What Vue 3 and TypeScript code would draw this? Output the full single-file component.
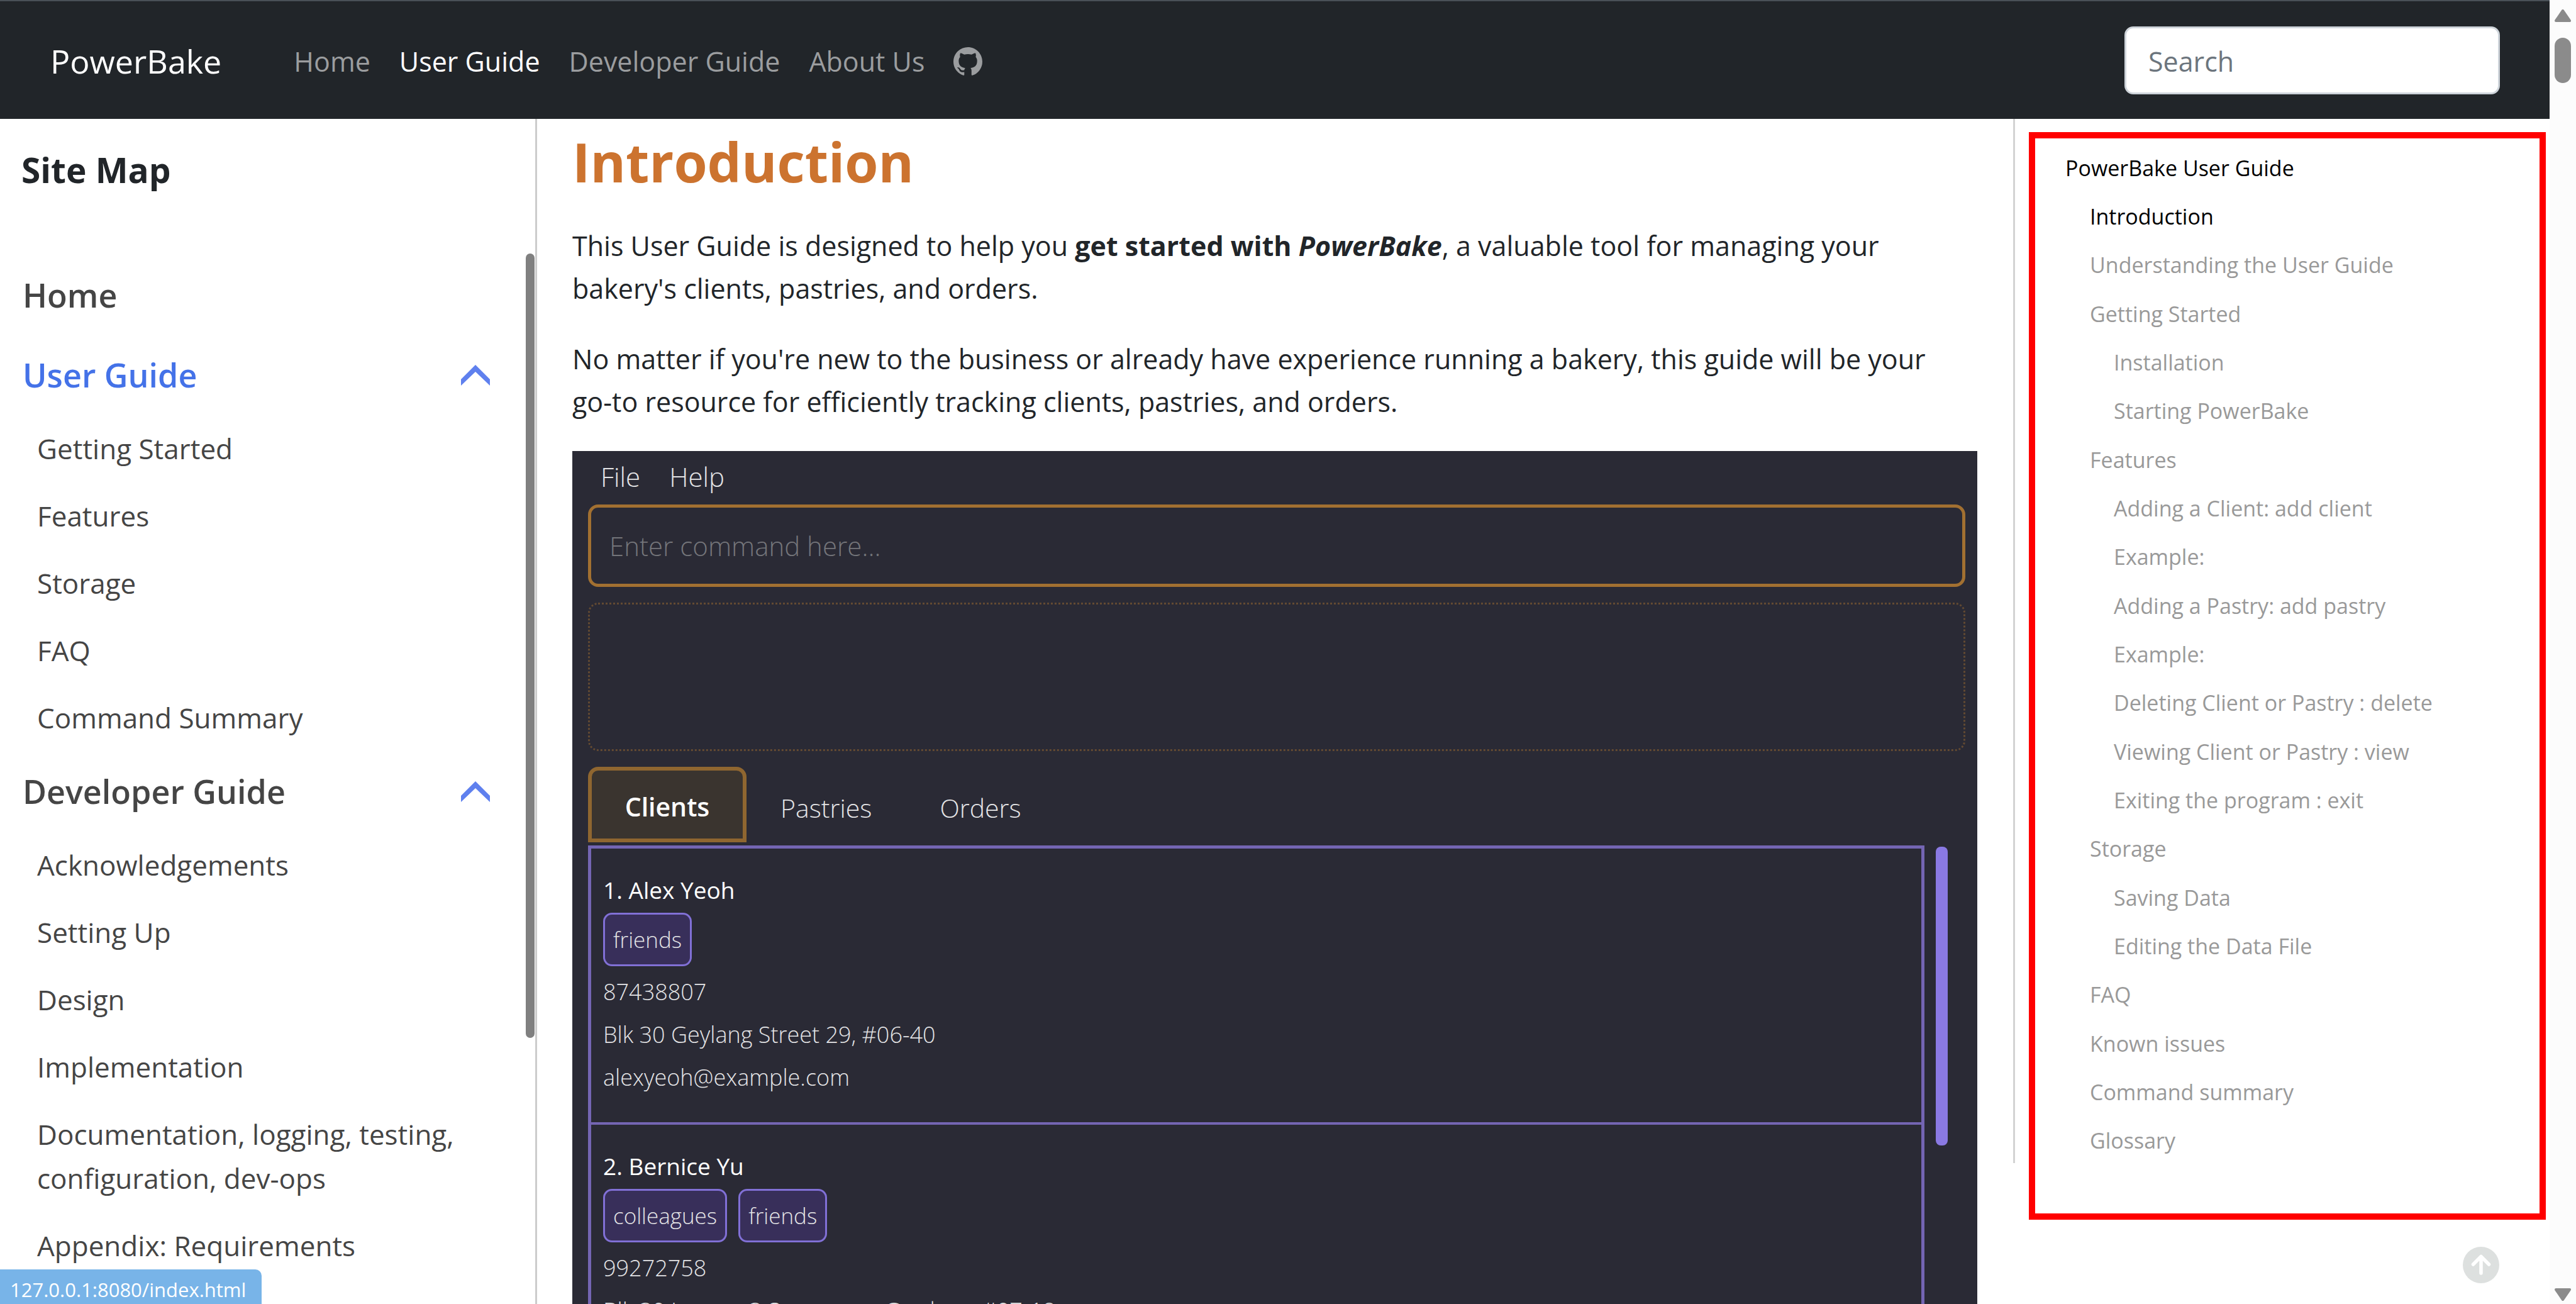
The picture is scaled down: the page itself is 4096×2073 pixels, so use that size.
<script setup lang="ts">
interface SiteGroup {
  title: string
  current?: boolean
  children: string[]
}

interface TocEntry {
  text: string
  level: 1 | 2 | 3
  active?: boolean
}

interface Client {
  id: number
  name: string
  tags: string[]
  phone: string
  address: string
  email: string
}

const navLinks = [
  { text: 'Home', active: false },
  { text: 'User Guide', active: true },
  { text: 'Developer Guide', active: false },
  { text: 'About Us', active: false },
]

const siteMap: SiteGroup[] = [
  { title: 'Home', children: [] },
  {
    title: 'User Guide',
    current: true,
    children: ['Getting Started', 'Features', 'Storage', 'FAQ', 'Command Summary'],
  },
  {
    title: 'Developer Guide',
    children: [
      'Acknowledgements',
      'Setting Up',
      'Design',
      'Implementation',
      'Documentation, logging, testing, configuration, dev-ops',
      'Appendix: Requirements',
    ],
  },
]

const toc: TocEntry[] = [
  { text: 'PowerBake User Guide', level: 1, active: true },
  { text: 'Introduction', level: 2, active: true },
  { text: 'Understanding the User Guide', level: 2 },
  { text: 'Getting Started', level: 2 },
  { text: 'Installation', level: 3 },
  { text: 'Starting PowerBake', level: 3 },
  { text: 'Features', level: 2 },
  { text: 'Adding a Client: add client', level: 3 },
  { text: 'Example:', level: 3 },
  { text: 'Adding a Pastry: add pastry', level: 3 },
  { text: 'Example:', level: 3 },
  { text: 'Deleting Client or Pastry : delete', level: 3 },
  { text: 'Viewing Client or Pastry : view', level: 3 },
  { text: 'Exiting the program : exit', level: 3 },
  { text: 'Storage', level: 2 },
  { text: 'Saving Data', level: 3 },
  { text: 'Editing the Data File', level: 3 },
  { text: 'FAQ', level: 2 },
  { text: 'Known issues', level: 2 },
  { text: 'Command summary', level: 2 },
  { text: 'Glossary', level: 2 },
]

const clients: Client[] = [
  {
    id: 1,
    name: 'Alex Yeoh',
    tags: ['friends'],
    phone: '87438807',
    address: 'Blk 30 Geylang Street 29, #06-40',
    email: 'alexyeoh@example.com',
  },
  {
    id: 2,
    name: 'Bernice Yu',
    tags: ['colleagues', 'friends'],
    phone: '99272758',
    address: 'Blk 30 Lorong 3 Serangoon Gardens, #07-18',
    email: 'berniceyu@example.com',
  },
]
</script>

<template>
  <div class="window">
    <div class="page">
      <header class="navbar">
        <a class="brand" href="#">PowerBake</a>
        <nav class="links" aria-label="Main">
          <a v-for="l in navLinks" :key="l.text" href="#" :class="{ active: l.active }">{{ l.text }}</a>
          <a class="github" href="#" aria-label="GitHub">
            <svg viewBox="0 0 16 16" aria-hidden="true">
              <path
                d="M8 0C3.58 0 0 3.58 0 8c0 3.54 2.29 6.53 5.47 7.59.4.07.55-.17.55-.38 0-.19-.01-.82-.01-1.49-2.01.37-2.53-.49-2.69-.94-.09-.23-.48-.94-.82-1.13-.28-.15-.68-.52-.01-.53.63-.01 1.08.58 1.23.82.72 1.21 1.87.87 2.33.66.07-.52.28-.87.51-1.07-1.78-.2-3.64-.89-3.64-3.95 0-.87.31-1.59.82-2.15-.08-.2-.36-1.02.08-2.12 0 0 .67-.21 2.2.82.64-.18 1.32-.27 2-.27s1.36.09 2 .27c1.53-1.04 2.2-.82 2.2-.82.44 1.1.16 1.92.08 2.12.51.56.82 1.27.82 2.15 0 3.07-1.87 3.75-3.65 3.95.29.25.54.73.54 1.48 0 1.07-.01 1.93-.01 2.2 0 .21.15.46.55.38A8.01 8.01 0 0 0 16 8c0-4.42-3.58-8-8-8z"
              />
            </svg>
          </a>
        </nav>
        <input class="search" type="search" placeholder="Search" aria-label="Search" />
      </header>

      <div class="columns">
        <aside class="sidebar">
          <h2 class="sidebar-title">Site Map</h2>
          <nav class="site-nav" aria-label="Site map">
            <ul class="groups">
              <li v-for="g in siteMap" :key="g.title">
                <div class="group-head" :class="{ current: g.current }">
                  <a href="#">{{ g.title }}</a>
                  <button v-if="g.children.length" type="button" :aria-label="'Collapse ' + g.title">
                    <svg viewBox="0 0 46 34" aria-hidden="true">
                      <path d="M0 24 23 1 46 24V34L23 12 0 34Z" />
                    </svg>
                  </button>
                </div>
                <ul v-if="g.children.length" class="children">
                  <li v-for="c in g.children" :key="c"><a href="#">{{ c }}</a></li>
                </ul>
              </li>
            </ul>
            <span class="side-thumb"></span>
          </nav>
        </aside>

        <main class="content">
          <h1>Introduction</h1>
          <p>
            This User Guide is designed to help you <strong>get started with <em>PowerBake</em></strong>, a valuable
            tool for managing your bakery's clients, pastries, and orders.
          </p>
          <p>
            No matter if you're new to the business or already have experience running a bakery, this guide will be
            your <span class="keep">go-to</span> resource for efficiently tracking clients, pastries, and orders.
          </p>

          <section class="app" aria-label="PowerBake application">
            <div class="menu">
              <button type="button">File</button>
              <button type="button">Help</button>
            </div>
            <input class="command" type="text" placeholder="Enter command here..." aria-label="Command" />
            <div class="result"></div>
            <div class="tabs">
              <button class="tab selected" type="button">Clients</button>
              <button class="tab" type="button">Pastries</button>
              <button class="tab" type="button">Orders</button>
            </div>
            <div class="list-row">
              <ol class="cards">
                <li v-for="c in clients" :key="c.id" class="card">
                  <h3>{{ c.id }}. {{ c.name }}</h3>
                  <div class="tags">
                    <span v-for="t in c.tags" :key="t" class="tag">{{ t }}</span>
                  </div>
                  <div class="line">{{ c.phone }}</div>
                  <div class="line">{{ c.address }}</div>
                  <div class="line">{{ c.email }}</div>
                </li>
              </ol>
              <span class="list-thumb"></span>
            </div>
          </section>
        </main>

        <aside class="toc-column">
          <nav class="toc" aria-label="On this page">
            <ul>
              <li v-for="(t, i) in toc" :key="i" :class="['level-' + t.level, { active: t.active }]">
                <a href="#">{{ t.text }}</a>
              </li>
            </ul>
          </nav>
        </aside>
      </div>

      <button class="to-top" type="button" aria-label="Back to top">
        <svg viewBox="0 0 58 58" aria-hidden="true">
          <circle cx="29" cy="29" r="29" fill="#dde0df" />
          <path
            d="M29 42V16M16.500 28 29 15.500 41.500 28"
            fill="none"
            stroke="#fff"
            stroke-width="5.500"
            stroke-linecap="round"
            stroke-linejoin="round"
          />
        </svg>
      </button>
      <div class="status">127.0.0.1:8080/index.html</div>
    </div>

    <div class="scrollbar">
      <svg viewBox="0 0 26 20" aria-hidden="true">
        <path d="M13 2 24 18H2Z" />
      </svg>
      <span class="page-thumb"></span>
      <svg class="down" viewBox="0 0 26 20" aria-hidden="true">
        <path d="M13 18 24 2H2Z" />
      </svg>
    </div>
  </div>
</template>

<style>
body {
  margin: 0;
}
</style>

<style scoped>
* {
  box-sizing: border-box;
}

ul,
ol {
  margin: 0;
  padding: 0;
  list-style: none;
}

a {
  color: inherit;
  text-decoration: none;
}

button {
  padding: 0;
  border: 0;
  background: none;
  color: inherit;
  font: inherit;
}

svg {
  display: block;
}

.window {
  display: flex;
  height: 100vh;
  overflow: hidden;
  background: #fff;
  color: #212529;
  font-family: 'Open Sans', 'Noto Sans', sans-serif;
  font-size: 43px;
  line-height: 68px;
}

.page {
  position: relative;
  display: flex;
  flex: 1;
  flex-direction: column;
  min-width: 0;
}

/* top bar */
.navbar {
  display: flex;
  align-items: center;
  flex: none;
  height: 189px;
  padding: 0 79px 0 80px;
  border-top: 2px solid #495057;
  background: #212529;
}

.brand {
  margin-right: 115px;
  padding-top: 2px;
  color: #fff;
  font-size: 52px;
}

.links {
  display: flex;
  align-items: center;
  flex: 1;
  gap: 46px;
  padding-top: 4px;
  color: #9b9d9f;
}

.links .active {
  color: #fff;
}

.github svg {
  width: 46px;
  height: 46px;
  fill: currentColor;
}

.search {
  width: 597px;
  height: 108px;
  padding: 4px 35px 0;
  border: 3px solid #ced4da;
  border-radius: 14px;
  background: #fff;
  color: #212529;
  font: inherit;
}

.search::placeholder {
  color: #6c757d;
  opacity: 1;
}

/* three columns under the bar */
.columns {
  display: flex;
  flex: 1;
  min-height: 0;
}

.sidebar {
  flex: none;
  width: 854px;
  overflow: hidden;
  border-right: 3px solid #ccc;
}

.sidebar-title {
  margin: 46px 0 98px 34px;
  font-size: 55px;
  line-height: 70px;
}

.site-nav {
  display: flex;
  align-items: flex-start;
  padding-right: 1px;
}

.groups {
  flex: 1;
  padding-top: 2px;
  color: #454545;
}

.group-head {
  display: flex;
  align-items: center;
  justify-content: space-between;
  height: 127px;
  padding: 0 57px 0 36px;
  font-size: 52px;
  font-weight: 600;
}

.group-head.current {
  color: #4472e8;
}

.group-head svg {
  width: 46px;
  height: 34px;
  fill: #5f80ee;
}

.children li {
  padding: 19px 57px 18px 59px;
  font-size: 44px;
  line-height: 70px;
}

.side-thumb {
  flex: none;
  width: 14px;
  height: 1247px;
  border-radius: 7px;
  background: #808080;
}

.content {
  display: flex;
  flex: 1;
  flex-direction: column;
  min-width: 0;
  overflow: hidden;
  padding: 13px 57px 0 56px;
}

.content h1 {
  margin: 0 0 45px;
  color: #cc732f;
  font-size: 86px;
  line-height: 110px;
}

.content p {
  margin: 0 0 44px;
}

.keep {
  white-space: nowrap;
}

/* application preview */
.app {
  display: flex;
  flex: 1 0 auto;
  flex-direction: column;
  padding: 0 19px 0 25px;
  background: #2a2a35;
  color: #e4e4e6;
  font-size: 42px;
  font-weight: 300;
}

.menu {
  display: flex;
  gap: 46px;
  padding: 7px 20px 10px;
}

.command {
  width: 100%;
  height: 131px;
  padding: 0 29px;
  border: 5px solid #a27031;
  border-radius: 16px;
  background: transparent;
  color: inherit;
  font: inherit;
}

.command::placeholder {
  color: #74757a;
  opacity: 1;
}

.result {
  height: 236px;
  margin: 25px 0;
  border: 3px dotted #634a32;
  border-radius: 16px;
}

.tabs {
  display: flex;
}

.tab {
  height: 120px;
  padding: 10px 54px 0;
  font-size: 41px;
}

.tab.selected {
  width: 252px;
  padding: 6px 0 0;
  border: 6px solid #8f6630;
  border-radius: 16px 16px 0 0;
  background: #3a342f;
  color: #fff;
  font-weight: 600;
}

.list-row {
  display: flex;
  align-items: flex-start;
  gap: 18px;
  padding: 5px 28px 0 0;
}

.cards {
  flex: 1;
  border: 5px solid #7465b3;
  border-bottom: 0;
}

.card {
  height: 439px;
  padding: 32px 20px 0 19px;
  border-bottom: 4px solid #7465b3;
  font-size: 36px;
}

.card h3 {
  margin: 0;
  color: #fff;
  font-size: 37px;
  font-weight: 400;
}

.tags {
  display: flex;
  gap: 18px;
  margin: 2px 0 7px;
}

.tag {
  height: 85px;
  padding: 0 13px;
  border: 3px solid #8170d6;
  border-radius: 14px;
  background: #382f5a;
  font-size: 35px;
  line-height: 79px;
}

.line {
  height: 68px;
}

.list-thumb {
  flex: none;
  width: 19px;
  height: 475px;
  margin-top: 2px;
  border-radius: 8px;
  background: #8a79e3;
}

/* on-page contents */
.toc-column {
  flex: none;
  width: 853px;
  height: 1660px;
  padding: 21px 6px 0 22px;
  border-left: 3px solid #d3d3d3;
}

.toc {
  height: 1729px;
  padding: 8px 48px;
  border: 10px solid #f00;
  color: #999;
  font-size: 34px;
}

.toc ul {
  display: flex;
  flex-direction: column;
  height: 1624px;
}

.toc li {
  display: flex;
  align-items: center;
  flex: 1;
}

.toc .active {
  color: #000;
}

.level-2 {
  padding-left: 39px;
}

.level-3 {
  padding-left: 77px;
}

/* overlays */
.to-top {
  position: absolute;
  right: 80px;
  bottom: 33px;
  width: 58px;
  height: 58px;
}

.status {
  position: absolute;
  bottom: 0;
  left: 0;
  height: 55px;
  padding: 0 25px 0 16px;
  border-radius: 0 10px 0 0;
  background: #78b4e8;
  color: #fff;
  font-size: 31px;
  line-height: 64px;
}

.scrollbar {
  display: flex;
  align-items: center;
  flex: none;
  flex-direction: column;
  width: 42px;
  padding: 15px 0 5px;
  background: #fcfcfc;
}

.scrollbar svg {
  width: 26px;
  height: 20px;
  fill: #8b8b8b;
  stroke: #8b8b8b;
  stroke-width: 4;
  stroke-linejoin: round;
}

.scrollbar .down {
  margin-top: auto;
}

.page-thumb {
  width: 26px;
  height: 72px;
  margin-top: 25px;
  border-radius: 13px;
  background: #8b8b8b;
}
</style>
